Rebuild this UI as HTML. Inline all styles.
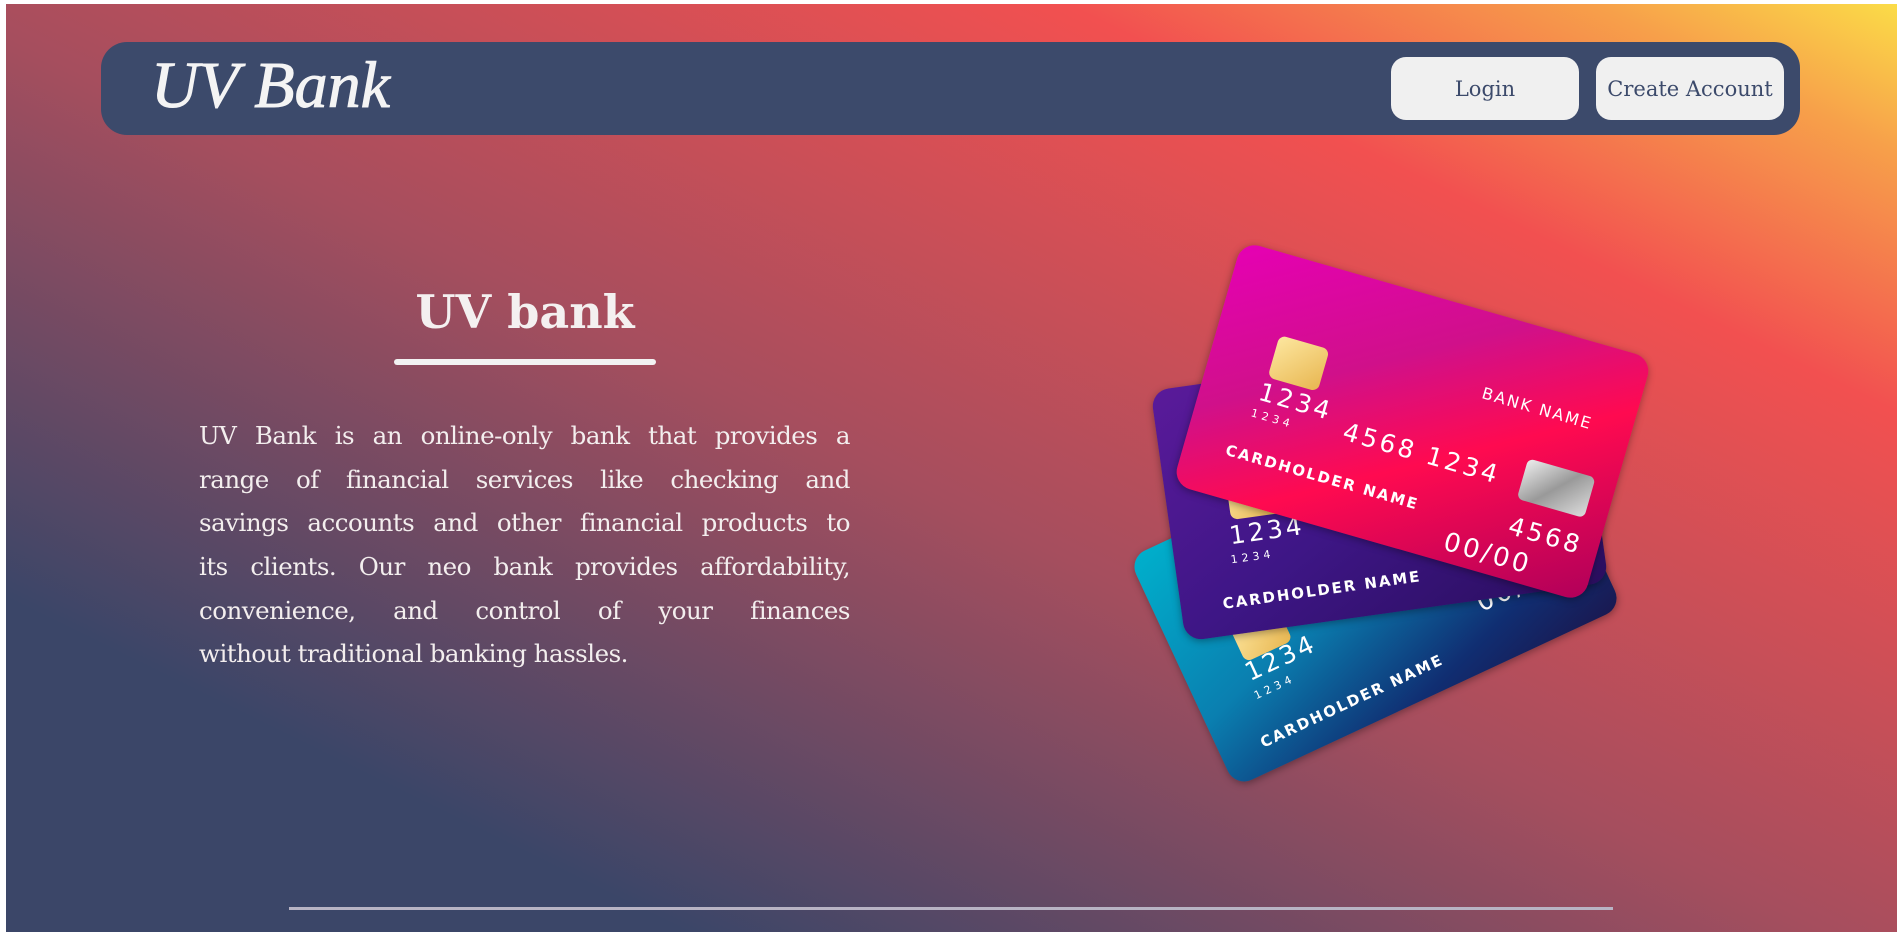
<!DOCTYPE html>
<html><head><meta charset="utf-8"><style>
*{margin:0;padding:0;box-sizing:border-box}
html,body{width:1901px;height:934px;overflow:hidden;background:#fff}
.page{position:absolute;left:6px;top:4px;width:1891px;height:928px;overflow:hidden;
background:linear-gradient(to top right,#3b4668 18%,#a54e5e 48%,#f25050 78%,#f7a04a 92%,#fbdc48 100%);}
.nav{position:absolute;left:95px;top:38px;width:1699px;height:93px;border-radius:26px;background:#3c4a6b}
.logo{position:absolute;left:50px;top:6px;font:italic 66px "Liberation Serif",serif;color:#f4f4f4;letter-spacing:0px;-webkit-text-stroke:1px #f4f4f4}
.btn{position:absolute;top:15px;width:188px;height:63px;border-radius:15px;background:#f0f0f0;color:#3c4a6b;
font:21px "DejaVu Serif",serif;display:flex;align-items:center;justify-content:center}
h1{position:absolute;left:294px;width:450px;top:281px;text-align:center;font:bold 46px "DejaVu Serif",serif;color:#f4f0f0}
.ul{position:absolute;left:388px;top:355px;width:262px;height:6px;background:#f2f2f2;border-radius:3px}
.p{position:absolute;left:193px;top:410px;width:651px;font:24.5px/43.65px "DejaVu Serif",serif;color:#f3eeee;letter-spacing:-0.5px}
.p div{text-align:justify;text-align-last:justify;white-space:nowrap}
.p div.l{text-align-last:left}
.hr{position:absolute;left:283px;top:903px;width:1324px;height:3px;background:#b8b4c4}
.card{position:absolute;width:427px;height:253px;border-radius:18px;overflow:hidden;box-shadow:0 2px 8px rgba(0,0,0,.35);color:#fff;font-family:"DejaVu Sans",sans-serif}
.card .chip{position:absolute;left:62px;top:80px;width:52px;height:44px;border-radius:7px;background:linear-gradient(135deg,#fde7a0,#e8b650)}
.card .n1{position:absolute;left:58px;top:125px;font-size:25px;letter-spacing:3px}
.card .n0{position:absolute;left:56px;top:156px;font-size:11px;letter-spacing:4px}
.card .n2{position:absolute;left:150px;top:140px;font-size:25px;letter-spacing:3px;white-space:nowrap}
.card .ch{position:absolute;left:42px;top:196px;font-size:15px;font-weight:bold;letter-spacing:2px;white-space:nowrap}
.card .bn{position:absolute;right:40px;top:70px;font-size:16px;letter-spacing:2px}
.card .vt{position:absolute;right:40px;top:205px;font-size:26px;letter-spacing:3px}
.card .holo{position:absolute;left:335px;top:130px;width:70px;height:42px;border-radius:6px;background:linear-gradient(135deg,#eee,#999,#ddd)}
</style></head><body><div class="page">
<div class="nav"><div class="logo">UV Bank</div>
<div class="btn" style="left:1290px">Login</div>
<div class="btn" style="left:1495px">Create Account</div></div>
<h1>UV bank</h1><div class="ul"></div>
<div class="p">
<div>UV Bank is an online-only bank that provides a</div>
<div>range of financial services like checking and</div>
<div>savings accounts and other financial products to</div>
<div>its clients. Our neo bank provides affordability,</div>
<div>convenience, and control of your finances</div>
<div class="l">without traditional banking hassles.</div>
</div>
<div class="hr"></div>

<div class="card" style="left:1156px;top:452px;transform:rotate(-25deg);background:linear-gradient(160deg,#00b0cc 0%,#0a7fb0 45%,#102e72 80%,#1a1850 100%)">
<div class="chip" style="top:100px"></div><div class="n1" style="top:140px">1234</div><div class="n0" style="top:172px">1234</div>
<div class="ch" style="top:215px">CARDHOLDER NAME</div><div class="vt" style="top:175px">00/00</div></div>

<div class="card" style="left:1160px;top:356px;transform:rotate(-8deg);background:linear-gradient(150deg,#5a1a9a 0%,#3e1686 50%,#2a0e5e 100%)">
<div class="chip" style="top:95px"></div><div class="n1" style="top:140px">1234</div><div class="n0" style="top:172px">1234</div>
<div class="ch" style="top:212px">CARDHOLDER NAME</div><div class="vt" style="top:190px">00/00</div></div>

<div class="card" style="left:1193px;top:291px;transform:rotate(16deg);background:linear-gradient(150deg,#e600b4 0%,#d0108a 35%,#ff0a50 60%,#b0005a 100%)">
<div class="chip"></div><div class="n1">1234</div><div class="n0">1234</div>
<div class="n2">4568 1234</div><div class="n2" style="left:335px;top:185px">4568</div><div class="bn">BANK NAME</div>
<div class="holo"></div>
<div class="ch">CARDHOLDER NAME</div><div class="vt" style="top:218px;right:60px">00/00</div></div>
</div></body></html>
